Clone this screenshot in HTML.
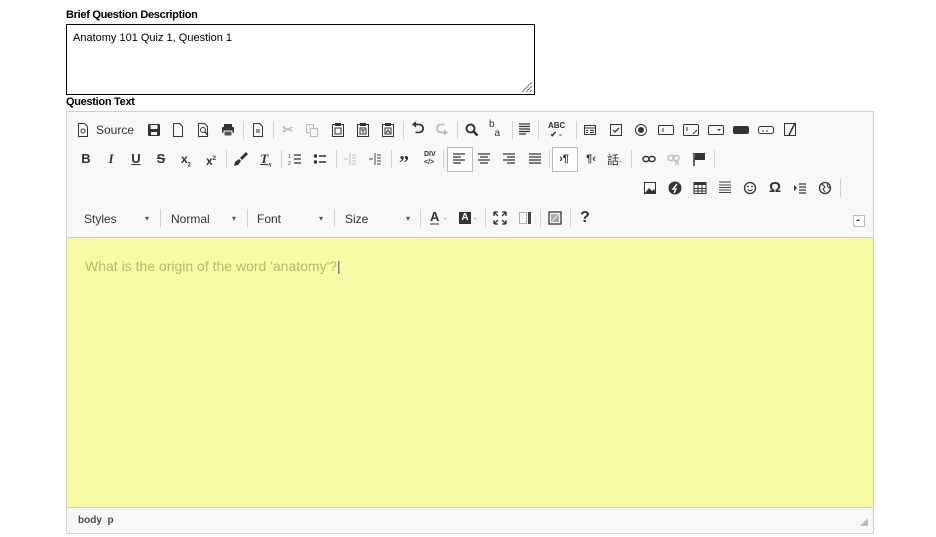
<!DOCTYPE html>
<html><head><meta charset="utf-8"><style>
body{margin:0;width:936px;height:537px;background:#fff;font-family:"Liberation Sans",Arial,sans-serif;position:relative;overflow:hidden}
.a{position:absolute}
.lbl{font-size:11px;font-weight:bold;color:#000;letter-spacing:-0.3px}
.sep{position:absolute;width:1px;height:18px;background:#d0d0d0}
.i{position:absolute;width:16px;height:16px;font-size:13px;line-height:16px;text-align:center;color:#333;font-weight:bold}
.i svg{display:block}
.t{position:absolute;font-size:12px;color:#333}
.dd{position:absolute;font-size:8px;color:#555}
</style></head><body>
<div class="a lbl" style="left:66px;top:9px">Brief Question Description</div>
<div class="a" style="left:66px;top:24px;width:467px;height:69px;border:1px solid #000">
 <div class="a" style="left:6px;top:7px;font-size:11px;color:#000">Anatomy 101 Quiz 1, Question 1</div>
 <svg class="a" style="right:1px;bottom:1px" width="14" height="14"><path d="M13 3L3 13M13 7L7 13M13 11L11 13" stroke="#777" stroke-width="1"/></svg>
</div>
<div class="a lbl" style="left:66px;top:96px">Question Text</div>
<div class="a" style="left:66px;top:111px;width:806px;height:421px;border:1px solid #d1d1d1;background:#f8f8f8">
</div>
<div class="a" style="left:67px;top:237px;width:806px;height:270px;background:#f7fba6;border-top:1px solid #d1d1d1"></div>
<div class="a" style="left:85px;top:258px;font-size:14px;color:#b7bb6c">What is the origin of the word 'anatomy'?<span style="color:#666">|</span></div>
<div class="a" style="left:67px;top:507px;width:806px;height:25px;background:#f8f8f8;border-top:1px solid #d1d1d1"></div>
<div class="a" style="left:78px;top:515px;font-size:10px;font-weight:bold;color:#484848">body&nbsp;&nbsp;p</div>
<svg class="a" style="left:860px;top:518px" width="9" height="9"><path d="M8 0L8 8L0 8Z" fill="#bbb"/></svg>

<!-- Row1 -->
<svg class="a" style="left:77px;top:123px" width="12" height="14"><path d="M1.5 .5h6l3 3v10h-9z" fill="none" stroke="#333"/><circle cx="6" cy="8" r="2" fill="none" stroke="#333"/></svg>
<div class="t" style="left:96px;top:123px">Source</div>
<svg class="a" style="left:147px;top:123px" width="14" height="14"><rect x="1" y="1" width="12" height="12" rx="1" fill="#333"/><rect x="3.5" y="2" width="7" height="4" fill="#f8f8f8"/><rect x="4" y="9" width="6" height="3" fill="#f8f8f8"/></svg>
<svg class="a" style="left:171px;top:123px" width="14" height="14"><path d="M2.5 .5h6l3 3v10h-9z" fill="none" stroke="#333"/></svg>
<svg class="a" style="left:196px;top:123px" width="14" height="14"><path d="M2.5 .5h6l3 3v10h-9z" fill="none" stroke="#333"/><circle cx="7" cy="7" r="2.5" fill="none" stroke="#333"/><path d="M9 9l3 3" stroke="#333" stroke-width="1.5"/></svg>
<svg class="a" style="left:221px;top:123px" width="14" height="14"><rect x="3" y="1" width="8" height="3" fill="#333"/><rect x="1" y="4" width="12" height="6" rx="1" fill="#333"/><rect x="3" y="8" width="8" height="5" fill="#555" stroke="#f8f8f8"/></svg>
<div class="sep" style="left:243px;top:121px"></div>
<svg class="a" style="left:251px;top:123px" width="14" height="14"><path d="M2.5 .5h6l3 3v10h-9z" fill="none" stroke="#333"/><path d="M5 7h4M5 9h4" stroke="#333"/></svg>
<div class="sep" style="left:273px;top:121px"></div>
<div class="i" style="left:280px;top:122px;color:#bbb">✂</div>
<svg class="a" style="left:305px;top:123px" width="14" height="14"><rect x="1.5" y="1.5" width="7" height="8" fill="none" stroke="#bbb"/><rect x="5.5" y="5.5" width="7" height="8" fill="#f8f8f8" stroke="#bbb"/></svg>
<svg class="a" style="left:331px;top:122px" width="14" height="16"><rect x="1.5" y="2.5" width="11" height="12" fill="none" stroke="#333"/><rect x="4" y="1" width="6" height="3" fill="#333"/><rect x="4" y="6" width="6" height="6" fill="none" stroke="#333"/></svg>
<svg class="a" style="left:356px;top:122px" width="14" height="16"><rect x="1.5" y="2.5" width="11" height="12" fill="none" stroke="#333"/><rect x="4" y="1" width="6" height="3" fill="#333"/><rect x="4" y="6" width="6" height="6" fill="none" stroke="#333"/><path d="M5 8h4M7 8v3" stroke="#333"/></svg>
<svg class="a" style="left:381px;top:122px" width="14" height="16"><rect x="1.5" y="2.5" width="11" height="12" fill="none" stroke="#333"/><rect x="4" y="1" width="6" height="3" fill="#333"/><rect x="4" y="6" width="6" height="6" fill="none" stroke="#333"/><path d="M5 11l2-3 2 3" stroke="#333" fill="none"/></svg>
<div class="sep" style="left:403px;top:121px"></div>
<div class="i" style="left:410px;top:121px;font-size:16px">⮌</div>
<div class="i" style="left:434px;top:121px;font-size:16px;color:#bbb">⮎</div>
<div class="sep" style="left:457px;top:121px"></div>
<svg class="a" style="left:465px;top:123px" width="14" height="14"><circle cx="5.5" cy="5.5" r="4" fill="none" stroke="#333" stroke-width="2"/><path d="M8.5 8.5l4 4" stroke="#333" stroke-width="2.5"/></svg>
<div class="a" style="left:489px;top:120px;font-size:10px;color:#333;line-height:9px">b<br>&nbsp;&nbsp;a</div>
<div class="sep" style="left:512px;top:121px"></div>
<svg class="a" style="left:518px;top:122px" width="13" height="16"><path d="M1 2h11M1 4.5h11M1 7h11M1 9.5h11M1 12h7" stroke="#333" stroke-width="1.3"/></svg>
<div class="sep" style="left:538px;top:121px"></div>
<div class="a" style="left:548px;top:121px;font-size:8px;font-weight:bold;color:#333;line-height:9px">ABC<br>&nbsp;✔ -</div>
<div class="sep" style="left:576px;top:121px"></div>
<svg class="a" style="left:583px;top:123px" width="14" height="14"><rect x="1.5" y="2.5" width="11" height="9" fill="none" stroke="#333"/><path d="M1 5h12M3 7.5h2M7 7.5h4M3 9.5h2M7 9.5h4" stroke="#333"/></svg>
<svg class="a" style="left:609px;top:123px" width="14" height="14"><rect x="1.5" y="1.5" width="11" height="11" fill="none" stroke="#333"/><path d="M4 7l2 2 4-4" stroke="#333" fill="none" stroke-width="1.3"/></svg>
<svg class="a" style="left:634px;top:123px" width="14" height="14"><circle cx="7" cy="7" r="5.5" fill="none" stroke="#333"/><circle cx="7" cy="7" r="3" fill="#333"/></svg>
<svg class="a" style="left:657px;top:123px" width="18" height="14"><rect x="1.5" y="2.5" width="15" height="9" rx="1" fill="none" stroke="#333"/><path d="M6 5v4" stroke="#333"/></svg>
<svg class="a" style="left:682px;top:123px" width="18" height="14"><rect x="1.5" y="1.5" width="15" height="11" rx="1" fill="none" stroke="#333"/><path d="M5 4v4M11 11l4-4" stroke="#333"/></svg>
<svg class="a" style="left:707px;top:123px" width="18" height="14"><rect x="1.5" y="2.5" width="15" height="9" rx="1" fill="none" stroke="#333"/><path d="M10 6h4l-2 2z" fill="#333"/></svg>
<svg class="a" style="left:732px;top:123px" width="18" height="14"><rect x="1" y="3" width="16" height="8" rx="2" fill="#333"/></svg>
<svg class="a" style="left:757px;top:123px" width="18" height="14"><rect x="1.5" y="3.5" width="15" height="7" rx="2" fill="none" stroke="#333"/><path d="M5 8h2M9 8h2" stroke="#333"/></svg>
<svg class="a" style="left:783px;top:122px" width="16" height="16"><rect x="1.5" y="1.5" width="11" height="12" fill="none" stroke="#333"/><path d="M6 13l6-12" stroke="#333" stroke-width="1.5"/></svg>

<!-- Row2 -->
<div class="i" style="left:78px;top:151px">B</div>
<div class="i" style="left:103px;top:151px;font-family:'Liberation Serif',serif;font-style:italic">I</div>
<div class="i" style="left:128px;top:151px;text-decoration:underline">U</div>
<div class="i" style="left:153px;top:151px;text-decoration:line-through">S</div>
<div class="i" style="left:178px;top:151px;font-size:12px">x<sub style="font-size:6px">2</sub></div>
<div class="i" style="left:203px;top:151px;font-size:12px">x<sup style="font-size:6px">2</sup></div>
<div class="sep" style="left:226px;top:150px"></div>
<svg class="a" style="left:233px;top:151px" width="16" height="16"><path d="M13 1l2 2-6 6-2-2z" fill="#333"/><path d="M6 8l2 2-3 4-4 1 1-4z" fill="#333"/></svg>
<div class="i" style="left:258px;top:151px;font-family:'Liberation Serif',serif;font-style:italic;text-decoration:underline">T<sub style="font-size:7px">x</sub></div>
<div class="sep" style="left:281px;top:150px"></div>
<svg class="a" style="left:288px;top:152px" width="14" height="14"><path d="M6 3h7M6 7h7M6 11h7" stroke="#333" stroke-width="1.3"/><text x="0" y="6" font-size="5" fill="#333">1</text><text x="0" y="13" font-size="5" fill="#333">2</text></svg>
<svg class="a" style="left:313px;top:152px" width="14" height="14"><circle cx="2.5" cy="4" r="1.7" fill="#333"/><circle cx="2.5" cy="10" r="1.7" fill="#333"/><path d="M6 4h7M6 10h7" stroke="#333" stroke-width="1.5"/></svg>
<div class="sep" style="left:336px;top:150px"></div>
<svg class="a" style="left:343px;top:152px" width="14" height="14"><path d="M7 1v12M9 3h4M9 6h4M9 9h4M9 12h4M1 7h4" stroke="#bbb"/></svg>
<svg class="a" style="left:368px;top:152px" width="14" height="14"><path d="M7 1v12M9 3h4M9 6h4M9 9h4M9 12h4M1 7h4" stroke="#444"/></svg>
<div class="sep" style="left:391px;top:150px"></div>
<div class="i" style="left:396px;top:152px;font-size:20px;font-family:'Liberation Serif',serif;line-height:22px">”</div>
<div class="a" style="left:424px;top:151px;font-size:7px;font-weight:bold;color:#333;line-height:8px">DIV<br>&lt;/&gt;</div>
<div class="sep" style="left:443px;top:150px"></div>
<div class="a" style="left:447px;top:147px;width:24px;height:23px;border:1px solid #bcbcbc;background:#fff"></div>
<svg class="a" style="left:452px;top:152px" width="14" height="14"><path d="M1 2h12M1 5h8M1 8h12M1 11h8" stroke="#333" stroke-width="1.3"/></svg>
<svg class="a" style="left:477px;top:152px" width="14" height="14"><path d="M1 2h12M3 5h8M1 8h12M3 11h8" stroke="#333" stroke-width="1.3"/></svg>
<svg class="a" style="left:502px;top:152px" width="14" height="14"><path d="M1 2h12M5 5h8M1 8h12M5 11h8" stroke="#333" stroke-width="1.3"/></svg>
<svg class="a" style="left:528px;top:152px" width="14" height="14"><path d="M1 2h12M1 5h12M1 8h12M1 11h12" stroke="#333" stroke-width="1.3"/></svg>
<div class="sep" style="left:549px;top:150px"></div>
<div class="a" style="left:552px;top:147px;width:24px;height:23px;border:1px solid #bcbcbc;background:#fff"></div>
<div class="i" style="left:556px;top:151px;font-size:11px">›¶</div>
<div class="i" style="left:583px;top:151px;font-size:11px">¶‹</div>
<div class="t" style="left:607px;top:151px;font-size:12px">話<span style="font-size:8px">-</span></div>
<div class="sep" style="left:631px;top:150px"></div>
<svg class="a" style="left:642px;top:152px" width="14" height="14"><rect x="1" y="4.5" width="6" height="5" rx="2.5" fill="none" stroke="#333" stroke-width="1.5"/><rect x="7" y="4.5" width="6" height="5" rx="2.5" fill="none" stroke="#333" stroke-width="1.5"/></svg>
<svg class="a" style="left:667px;top:152px" width="14" height="14"><rect x="1" y="3.5" width="6" height="5" rx="2.5" fill="none" stroke="#bbb" stroke-width="1.5"/><rect x="6" y="3.5" width="6" height="5" rx="2.5" fill="none" stroke="#bbb" stroke-width="1.5"/><path d="M8 9l4 4M12 9l-4 4" stroke="#bbb"/></svg>
<svg class="a" style="left:692px;top:152px" width="14" height="14"><path d="M2 1v13" stroke="#333" stroke-width="1.5"/><path d="M3 1h10v7H3z" fill="#333"/></svg>
<div class="sep" style="left:714px;top:150px"></div>

<!-- Row3 -->
<svg class="a" style="left:643px;top:181px" width="14" height="14"><rect x="1.5" y="1.5" width="11" height="11" fill="none" stroke="#333"/><path d="M2 12l4-5 3 3 2-2 2 4z" fill="#333"/></svg>
<svg class="a" style="left:668px;top:181px" width="14" height="14"><circle cx="7" cy="7" r="6.5" fill="#333"/><path d="M9 3L5 8h3l-2 4" stroke="#f8f8f8" fill="none" stroke-width="1.5"/></svg>
<svg class="a" style="left:693px;top:181px" width="14" height="14"><rect x="1" y="1.5" width="12" height="11" fill="none" stroke="#333"/><path d="M1 2h12v2H1z" fill="#333"/><path d="M1 7.5h12M1 10h12M5 2v11M9 2v11" stroke="#333"/></svg>
<svg class="a" style="left:718px;top:181px" width="14" height="14"><path d="M1 1h12M1 4h12M1 6.5h12M1 9h12M1 11.5h12" stroke="#444"/></svg>
<svg class="a" style="left:743px;top:181px" width="14" height="14"><circle cx="7" cy="7" r="5.5" fill="none" stroke="#333" stroke-width="1.3"/><circle cx="5" cy="5.5" r=".9" fill="#333"/><circle cx="9" cy="5.5" r=".9" fill="#333"/><path d="M4.5 8.5q2.5 2.5 5 0" stroke="#333" fill="none"/></svg>
<div class="i" style="left:767px;top:180px;font-size:15px">Ω</div>
<svg class="a" style="left:793px;top:181px" width="14" height="14"><path d="M1 4l3 3-3 3z" fill="#333"/><path d="M6 3h7M6 6h7M6 9h7M6 12h7" stroke="#333" stroke-width="1.3"/></svg>
<svg class="a" style="left:818px;top:181px" width="14" height="14"><circle cx="7" cy="7" r="5.5" fill="none" stroke="#333" stroke-width="1.3"/><path d="M4 3l3 3-2 2 2 3M9 3l1 3 2 1" stroke="#333" fill="none"/></svg>
<div class="sep" style="left:840px;top:179px"></div>

<!-- Row4 -->
<div class="t" style="left:84px;top:212px">Styles</div><div class="dd" style="left:145px;top:214px">▾</div>
<div class="sep" style="left:160px;top:209px"></div>
<div class="t" style="left:171px;top:212px">Normal</div><div class="dd" style="left:232px;top:214px">▾</div>
<div class="sep" style="left:247px;top:209px"></div>
<div class="t" style="left:257px;top:212px">Font</div><div class="dd" style="left:319px;top:214px">▾</div>
<div class="sep" style="left:334px;top:209px"></div>
<div class="t" style="left:345px;top:212px">Size</div><div class="dd" style="left:406px;top:214px">▾</div>
<div class="sep" style="left:420px;top:209px"></div>
<div class="a" style="left:430px;top:210px;font-size:13px;font-weight:bold;color:#333;border-bottom:2px solid #999;line-height:13px">A</div><div class="dd" style="left:444px;top:214px">-</div>
<div class="a" style="left:459px;top:212px;width:12px;height:12px;background:#333;color:#f8f8f8;font-size:10px;font-weight:bold;text-align:center;line-height:12px">A</div><div class="dd" style="left:474px;top:214px">-</div>
<div class="sep" style="left:485px;top:209px"></div>
<svg class="a" style="left:493px;top:211px" width="14" height="14"><path d="M1 1l4 4M1 1h4M1 1v4M13 1l-4 4M13 1h-4M13 1v4M1 13l4-4M1 13h4M1 13v-4M13 13l-4-4M13 13h-4M13 13v-4" stroke="#333" stroke-width="1.3"/></svg>
<svg class="a" style="left:518px;top:211px" width="14" height="14"><rect x="1.5" y="1.5" width="7" height="11" fill="none" stroke="#666" stroke-dasharray="1 1"/><rect x="10" y="1" width="3" height="12" fill="#444"/></svg>
<div class="sep" style="left:540px;top:209px"></div>
<svg class="a" style="left:548px;top:211px" width="14" height="14"><rect x="1" y="1" width="12" height="12" fill="none" stroke="#333" stroke-width="1.3"/><rect x="3" y="3" width="8" height="8" fill="#aaa"/><path d="M4 10l6-6" stroke="#eee"/></svg>
<div class="sep" style="left:570px;top:209px"></div>
<div class="i" style="left:577px;top:210px;font-size:16px">?</div>
<div class="a" style="left:853px;top:215px;width:10px;height:10px;border:1px solid #bbb;background:#fff"></div>
<div class="a" style="left:856px;top:219px;width:0;height:0;border-left:2px solid transparent;border-right:2px solid transparent;border-bottom:2px solid #333"></div>
</body></html>
